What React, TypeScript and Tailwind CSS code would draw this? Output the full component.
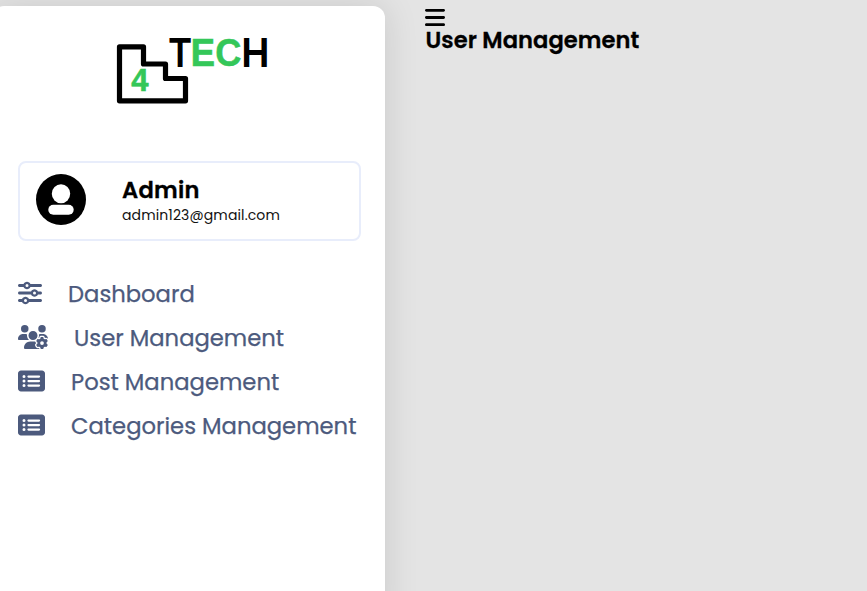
import { FaBars, FaRectangleList, FaSliders, FaUsersGear } from "react-icons/fa6";

function Logo() {
  return (
    <svg width="160" height="76" viewBox="112 33 160 76" className="ml-[112px] mt-[27px] block overflow-visible">
      <path d="M119.5 46.8H143.5V64H165.5V78.5H185.5V100.8H119.5Z" fill="none" stroke="#000" strokeWidth="5.2" strokeLinejoin="round" />
      <g fontFamily="'Liberation Sans', Arial, sans-serif" fontSize="39">
        <text x="169.4" y="66.3" textLength="21.2" lengthAdjust="spacingAndGlyphs" stroke="#000" strokeWidth="1.8">T</text>
        <text x="190.7" y="66.3" fill="#34c759" stroke="#34c759" strokeWidth="0.7" fontWeight="700" textLength="24.2" lengthAdjust="spacingAndGlyphs">E</text>
        <text x="215.2" y="66.3" fill="#34c759" stroke="#34c759" strokeWidth="0.5" fontWeight="700" textLength="26.2" lengthAdjust="spacingAndGlyphs">C</text>
        <text x="241.7" y="66.3" textLength="27.2" lengthAdjust="spacingAndGlyphs" stroke="#000" strokeWidth="1.8">H</text>
        <text x="131.3" y="91.3" fill="#34c759" stroke="#34c759" strokeWidth="0.6" fontWeight="700" fontSize="31">4</text>
      </g>
    </svg>
  );
}

function Avatar() {
  return (
    <svg width="50" height="51" viewBox="0 0 50 51" className="shrink-0">
      <ellipse cx="25" cy="25.5" rx="25" ry="25.5" fill="#000" />
      <ellipse cx="25" cy="19.7" rx="9.2" ry="9.5" fill="#fff" />
      <rect x="12.3" y="30.8" width="25.4" height="10" rx="5" fill="#fff" />
    </svg>
  );
}

const items = [
  { label: "Dashboard", Icon: FaSliders, size: "w-6" },
  { label: "User Management", Icon: FaUsersGear, size: "w-[30px]" },
  { label: "Post Management", Icon: FaRectangleList, size: "w-[27px]" },
  { label: "Categories Management", Icon: FaRectangleList, size: "w-[27px]" },
];

export default function App() {
  return (
    <div className="flex h-[591px] overflow-hidden bg-[#e4e4e4] pt-1.5 font-['Poppins','Inter',sans-serif] text-black">
      <aside className="-ml-2 h-[620px] w-[393px] shrink-0 rounded-xl bg-white pl-2 shadow-[0_0_35px_rgba(0,0,0,0.12)]">
        <Logo />
        <div className="ml-[18px] mt-[52px] flex h-20 w-[343px] items-center rounded-lg border-2 border-[#e8edfb] pl-4 pb-1">
          <Avatar />
          <div className="ml-9 mt-[5px]">
            <div className="-mt-0.5 text-[22.6px] font-semibold leading-7 tracking-[0.25px] [-webkit-text-stroke:0.3px_#000]"><span>Admin</span></div>
            <div className="text-[14px] leading-[22px] tracking-[0.12px] text-[#111]"><span>admin123@gmail.com</span></div>
          </div>
        </div>
        <nav className="ml-[18px] mt-[30px] text-[#4c5a7d]">
          {items.map(({ label, Icon, size }) => (
            <a key={label} className="flex h-11 items-center whitespace-nowrap">
              <Icon className={`h-6 shrink-0 ${size}`} />
              <span className="ml-[26px] mt-0.5 text-[22.7px] leading-8 [-webkit-text-stroke:0.25px_#4c5a7d]">{label}</span>
            </a>
          ))}
        </nav>
      </aside>
      <main className="pl-10">
        <FaBars className="block h-[23px] w-5" />
        <h1 className="-mt-[3px] whitespace-nowrap pl-[0.5px] text-[22.6px] font-semibold leading-7 tracking-[0.06px] [-webkit-text-stroke:0.3px_#000]"><span>User Management</span></h1>
      </main>
    </div>
  );
}
